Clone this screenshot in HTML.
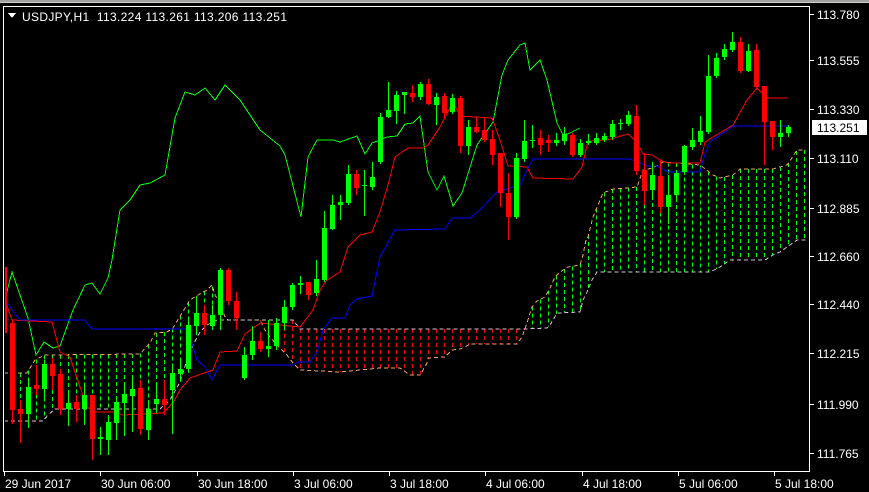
<!DOCTYPE html>
<html><head><meta charset="utf-8">
<style>
html,body{margin:0;padding:0;background:#000;}
body{width:869px;height:492px;overflow:hidden;position:relative;font-family:"Liberation Sans",sans-serif;}
svg{position:absolute;left:0;top:0;}
.t{fill:#fff;font-size:12px;font-family:"Liberation Sans",sans-serif;}
</style></head><body>
<svg id="s" width="869" height="492" xmlns="http://www.w3.org/2000/svg" shape-rendering="crispEdges">
<rect x="0" y="0" width="869" height="492" fill="#000"/>
<rect x="0" y="0" width="869" height="2" fill="#a0a0a0"/>
<rect x="0" y="2" width="869" height="1" fill="#d4d0c8"/>
<rect x="3.5" y="6.5" width="806" height="465" fill="none" stroke="#fff" stroke-width="1"/>
<defs><clipPath id="c"><rect x="5" y="8" width="804" height="463"/></clipPath></defs>
<g id="g" clip-path="url(#c)"></g>
<g id="ax"></g>
<polygon points="8,13 16,13 12,18" fill="#fff"/>
<text class="t" x="22" y="21" textLength="265" lengthAdjust="spacing" style="white-space:pre">USDJPY,H1&#160;&#160;113.224 113.261 113.206 113.251</text>
</svg>
<script>
var NS="http://www.w3.org/2000/svg",g=document.getElementById('g'),ax=document.getElementById('ax');
function el(p,t,a){var e=document.createElementNS(NS,t);for(var k in a)e.setAttribute(k,a[k]);p.appendChild(e);return e;}
function pl(p,pts,col,dash){var a={points:pts.map(function(q){return q.join(',')}).join(' '),fill:'none',stroke:col,'stroke-width':1};if(dash)a['stroke-dasharray']=dash;el(p,'polyline',a);}
function interp(pts,x){if(x<=pts[0][0])return pts[0][1];for(var i=1;i<pts.length;i++){if(x<=pts[i][0]){var a=pts[i-1],b=pts[i];return a[1]+(b[1]-a[1])*(x-a[0])/(b[0]-a[0]||1);}}return pts[pts.length-1][1];}
var A=[[4,373],[27,373],[35,360],[45,355],[140,354],[150,343],[155,333],[167,332],[173,328],[182,313],[190,300],[198,295],[207,290],[212,285],[215,295],[220,303],[225,317],[228,320],[260,320],[265,330],[270,337],[280,348],[287,355],[293,363],[300,370],[340,372],[380,368],[400,368],[410,375],[420,375],[427,363],[428,358],[445,357],[452,350],[460,349],[465,347],[470,344],[517,344],[522,337],[527,323],[532,307],[537,301],[545,297],[550,288],[555,277],[560,272],[568,267],[580,265],[583,255],[586,240],[588,237],[593,217],[603,193],[613,189],[637,187],[643,170],[653,168],[663,162],[700,165],[713,175],[720,178],[733,175],[740,169],[773,169],[787,165],[792,158],[797,150],[806,150]];
var B=[[4,421],[43,421],[48,415],[55,409],[160,409],[170,400],[180,382],[188,357],[193,345],[200,332],[207,325],[217,320],[293,320],[300,329],[523,329],[547,328],[550,325],[553,320],[557,313],[580,312],[583,300],[587,292],[592,280],[597,272],[710,272],[720,267],[730,260],[765,260],[773,255],[780,252],[797,240],[806,240]];
for(var x=4.5;x<=806;x+=8){var a=interp(A,x),b=interp(B,x);var c=a<b?'#00ff00':'#ff0000';el(g,'line',{x1:x,y1:Math.min(a,b),x2:x,y2:Math.max(a,b),stroke:c,'stroke-width':1,'stroke-dasharray':'4,3'});}
pl(g,A,'#f4a460','4,3');pl(g,B,'#d8bfd8','4,3');
var CH=[[4,303],[12,272],[28,318],[36,355],[44,342],[53,348],[60,346],[73,310],[85,285],[92,283],[100,294],[108,278],[112,260],[120,210],[130,200],[140,185],[150,183],[165,175],[175,118],[185,92],[195,95],[205,88],[215,100],[225,85],[240,100],[250,115],[260,130],[280,146],[285,155],[301,217],[308,157],[317,140],[333,140],[340,142],[357,136],[365,154],[372,143],[380,140],[387,137],[397,136],[405,124],[413,123],[420,116],[428,172],[437,190],[444,176],[453,206],[462,193],[477,145],[493,122],[502,75],[508,60],[520,45],[525,43],[530,70],[540,60],[547,80],[557,123],[563,135],[570,133],[580,128]];
var TK=[[5,300],[12,320],[52,322],[60,352],[70,357],[80,387],[87,407],[95,412],[113,412],[123,415],[163,413],[173,403],[180,390],[190,378],[207,372],[213,370],[220,352],[237,351],[245,334],[260,323],[300,327],[313,310],[320,290],[327,280],[340,272],[348,247],[360,235],[372,232],[380,212],[388,185],[395,157],[408,148],[423,148],[428,145],[440,127],[453,102],[460,116],[492,118],[500,140],[508,166],[527,167],[533,178],[573,179],[582,167],[588,141],[607,140],[628,134],[637,142],[643,154],[652,155],[660,160],[668,163],[700,163],[705,142],[713,137],[733,125],[747,100],[757,88],[764,95],[764,98],[788,98]];
var KJ=[[4,297],[12,310],[20,320],[85,320],[92,329],[188,329],[193,347],[197,360],[205,367],[212,380],[220,365],[293,365],[298,362],[310,362],[317,352],[323,330],[332,318],[345,318],[350,305],[357,299],[372,296],[380,257],[395,230],[445,229],[452,218],[470,218],[480,210],[497,192],[510,188],[520,185],[527,170],[533,159],[630,159],[640,163],[647,166],[657,166],[668,172],[700,172],[703,160],[710,142],[723,133],[733,126],[788,126]];
pl(g,CH,'#00ff00');pl(g,TK,'#ff0000');pl(g,KJ,'#0000ff');
var C=[[4,'R',267,333,262,340],[12,'R',323,410,320,424],[20,'R',409,414,400,443],[28,'G',387,414,380,428],[36,'R',385,389,365,395],[44,'G',364,389,360,398],[52,'R',364,376,358,390],[60,'R',374,409,369,415],[68,'G',403,409,392,426],[76,'R',402,409,395,422],[84,'G',395,409,383,425],[92,'R',395,439,395,460],[100,'G',437,439,427,455],[108,'G',422,440,415,455],[116,'G',402,423,398,440],[124,'G',394,403,383,436],[132,'G',389,396,375,432],[140,'R',388,429,380,435],[148,'G',409,430,400,440],[156,'G',399,404,385,413],[164,'R',399,405,380,415],[172,'G',373,390,367,434],[180,'G',369,374,360,382],[188,'G',325,369,318,373],[196,'G',313,326,300,334],[204,'R',313,325,305,335],[212,'G',315,326,305,330],[220,'G',270,315,268,330],[228,'R',270,301,268,305],[236,'R',301,318,292,330],[244,'G',355,378,347,380],[252,'G',341,355,326,360],[260,'R',341,349,332,352],[268,'G',346,349,320,357],[276,'G',323,346,318,350],[284,'G',307,323,300,330],[292,'G',285,307,283,310],[300,'G',283,285,276,294],[308,'R',282,295,282,300],[316,'G',279,293,260,296],[324,'G',228,280,211,282],[332,'G',205,229,195,230],[340,'G',202,205,195,220],[348,'G',174,203,165,205],[356,'R',174,188,170,195],[364,'G',185,186,170,216],[372,'G',177,187,162,190],[380,'G',117,162,113,164],[388,'G',110,117,82,118],[396,'G',95,111,91,124],[404,'G',92,95,92,114],[412,'R',93,97,85,102],[420,'G',84,97,82,100],[428,'R',84,104,79,105],[436,'G',97,105,93,125],[444,'R',96,113,93,118],[452,'G',98,112,94,114],[460,'R',98,146,96,153],[468,'G',127,146,120,155],[476,'R',127,132,117,133],[484,'R',130,140,117,142],[492,'R',139,155,130,165],[500,'R',153,193,153,207],[508,'R',193,217,173,240],[516,'G',158,217,153,219],[524,'G',141,159,120,162],[532,'G',140,141,125,148],[540,'R',138,145,130,155],[548,'R',140,143,135,152],[556,'G',140,143,133,146],[564,'G',134,141,127,145],[572,'R',135,155,133,157],[580,'G',143,155,139,157],[588,'G',141,143,134,145],[596,'G',138,143,133,145],[604,'G',136,140,133,142],[612,'G',124,137,120,140],[620,'G',123,124,119,130],[628,'G',115,124,111,126],[636,'R',116,171,105,175],[644,'R',170,191,153,205],[652,'G',175,190,162,200],[660,'R',176,207,160,213],[668,'G',195,207,175,224],[676,'G',173,195,170,198],[684,'G',146,172,145,175],[692,'G',140,147,128,150],[700,'G',131,142,116,145],[708,'G',76,132,55,134],[716,'G',58,76,53,78],[724,'G',49,57,44,60],[732,'G',42,50,32,52],[740,'R',42,71,37,73],[748,'G',51,71,44,72],[756,'R',50,87,44,90],[764,'R',86,122,86,165],[772,'R',121,137,121,150],[780,'G',133,137,120,147],[788,'G',127,133,125,137]];
C.forEach(function(c){var x=c[0]+0.5,col=c[1]=='G'?'#00ff00':'#ff0000';el(g,'line',{x1:x,y1:c[4],x2:x,y2:c[5],stroke:col,'stroke-width':1});el(g,'rect',{x:c[0]-2,y:c[2],width:5,height:Math.max(1,c[3]-c[2]),fill:col});});
var P=[['113.780',14],['113.555',60],['113.330',109],['113.110',158],['112.885',208],['112.660',256],['112.440',304],['112.215',353],['111.990',404],['111.765',453]];
P.forEach(function(p){el(ax,'line',{x1:810,y1:p[1]+0.5,x2:814,y2:p[1]+0.5,stroke:'#fff'});var t=el(ax,'text',{x:817,y:p[1]+5,'class':'t'});t.textContent=p[0];});
el(ax,'rect',{x:812,y:120,width:55,height:15,fill:'#fff'});
var t=el(ax,'text',{x:817,y:132,fill:'#000','font-size':'12','font-family':'Liberation Sans, sans-serif'});t.textContent='113.251';
var T=[['29 Jun 2017',4],['30 Jun 06:00',100],['30 Jun 18:00',197],['3 Jul 06:00',293],['3 Jul 18:00',389],['4 Jul 06:00',485],['4 Jul 18:00',582],['5 Jul 06:00',678],['5 Jul 18:00',774]];
T.forEach(function(p){el(ax,'line',{x1:p[1]+0.5,y1:472,x2:p[1]+0.5,y2:476,stroke:'#fff'});var t=el(ax,'text',{x:p[1]+1,y:488,'class':'t'});t.textContent=p[0];});
</script>
</body></html>
